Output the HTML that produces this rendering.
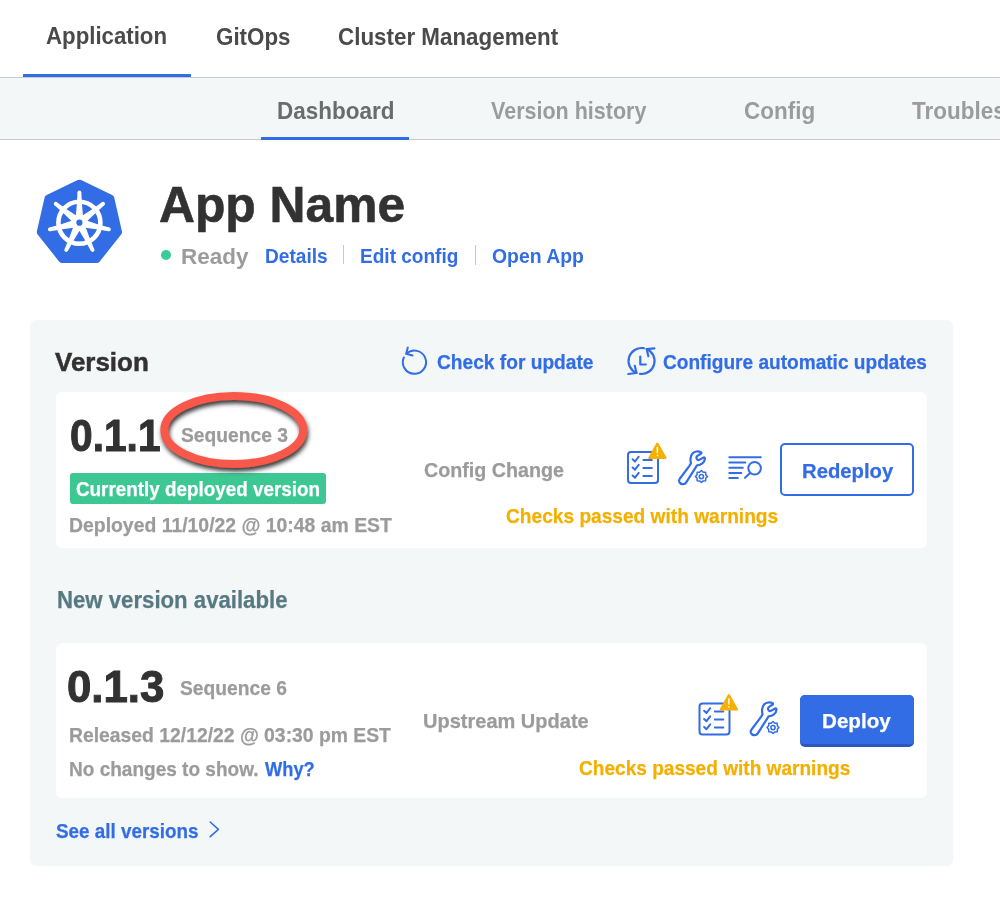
<!DOCTYPE html>
<html>
<head>
<meta charset="utf-8">
<style>
html,body{margin:0;padding:0;background:#fff;width:1000px;height:898px;overflow:hidden;position:relative;}
body{font-family:"Liberation Sans",sans-serif;font-weight:700;}
.t{position:absolute;white-space:nowrap;transform-origin:0 0;}
.abs{position:absolute;}
svg{position:absolute;left:0;top:0;overflow:visible;}
</style>
</head>
<body>
<!-- top nav -->
<div class="abs" style="left:0;top:77px;width:1000px;height:1px;background:#c6cacc;"></div>
<div class="abs" style="left:23px;top:74px;width:168px;height:3px;background:#326de6;"></div>
<!-- sub nav -->
<div class="abs" style="left:0;top:78px;width:1000px;height:61px;background:#f4f7f8;"></div>
<div class="abs" style="left:0;top:139px;width:1000px;height:1px;background:#c6cacc;"></div>
<div class="abs" style="left:261px;top:137px;width:148px;height:3px;background:#326de6;"></div>

<!-- app header dividers / dot -->
<div class="abs" style="left:161px;top:250px;width:10px;height:10px;border-radius:50%;background:#38cc97;"></div>
<div class="abs" style="left:343px;top:245px;width:1px;height:19px;background:#c8c8c8;"></div>
<div class="abs" style="left:475px;top:244.5px;width:1px;height:20px;background:#c8c8c8;"></div>

<!-- version outer card -->
<div class="abs" style="left:30px;top:320px;width:923px;height:546px;border-radius:6px;background:#f4f7f8;"></div>
<!-- inner cards -->
<div class="abs" style="left:56px;top:392px;width:871px;height:156px;border-radius:6px;background:#fff;"></div>
<div class="abs" style="left:56px;top:643px;width:871px;height:155px;border-radius:6px;background:#fff;"></div>
<!-- badge -->
<div class="abs" style="left:70px;top:473.2px;width:256px;height:30.4px;border-radius:3px;background:#3cc793;"></div>
<!-- redeploy button -->
<div class="abs" style="left:780px;top:443px;width:130px;height:49px;border:2px solid #326de6;border-radius:5px;box-sizing:content-box;"></div>
<!-- deploy button -->
<div class="abs" style="left:800px;top:695px;width:114px;height:52px;border-radius:5px;background:#2a58be;"></div>
<div class="abs" style="left:800px;top:695px;width:114px;height:49px;border-radius:5px 5px 4px 4px;background:#326de6;"></div>

<svg width="1000" height="898" viewBox="0 0 1000 898">
  <defs>
    <filter id="sh" x="-20%" y="-30%" width="140%" height="160%">
      <feDropShadow dx="1.2" dy="3.5" stdDeviation="2" flood-color="#3a3a3a" flood-opacity="1"/>
    </filter>
    <g id="chk" fill="none" stroke="#326de6" stroke-width="2" stroke-linecap="round" stroke-linejoin="round">
      <rect x="628" y="452" width="30" height="31" rx="3"/>
      <polyline points="632.6,459.3 635,461.5 638.7,456.7"/>
      <polyline points="632.6,467.5 635,469.7 638.7,464.9"/>
      <polyline points="632.6,475.5 635,477.7 638.7,472.9"/>
      <line x1="643.4" y1="460" x2="651.8" y2="460"/>
      <line x1="643.4" y1="468" x2="651.8" y2="468"/>
      <line x1="643.4" y1="476" x2="651.8" y2="476"/>
      <polygon points="657.4,443.6 649.3,458 665.5,458" fill="#f5b000" stroke="#f5b000" stroke-width="2.2"/>
      <line x1="657.4" y1="447.6" x2="657.4" y2="452.6" stroke="#fff" stroke-width="1.5"/>
      <circle cx="657.4" cy="455.4" r="0.8" fill="#fff" stroke="none"/>
    </g>
    <g id="wr" fill="none" stroke="#326de6" stroke-linecap="round" stroke-linejoin="round">
      <path stroke-width="2.2" d="M19.6 20.6 L21.0 18.2 C20.0 15.5 20.3 11.0 22.5 8.5 C24.5 6.3 28.5 5.8 31.2 7.4 Q31.8 8.0 30.8 8.8 L27.8 10.6 C25.4 12.0 26.4 15.6 29.2 14.9 L33.6 12.5 Q35.0 12.0 34.9 13.6 C34.6 17.6 31.0 20.2 27.0 20.3 L16.2 37.4 C14.8 39.9 10.6 39.8 9.3 37.0 Q8.7 35.4 9.6 34.0 Z"/>
      <polygon stroke-width="1.5" points="31.40,25.55 33.20,27.21 35.64,27.31 35.74,29.75 37.40,31.55 35.74,33.35 35.64,35.79 33.20,35.89 31.40,37.55 29.60,35.89 27.16,35.79 27.06,33.35 25.40,31.55 27.06,29.75 27.16,27.31 29.60,27.21"/>
      <circle stroke-width="1.5" cx="31.4" cy="31.55" r="2.1"/>
    </g>
  </defs>

  <!-- kubernetes logo -->
  <polygon points="79.40,183.70 110.36,198.61 118.01,232.11 96.58,258.98 62.22,258.98 40.79,232.11 48.44,198.61" fill="#326de6" stroke="#326de6" stroke-width="8" stroke-linejoin="round"/>
  <g fill="#fff">
    <circle cx="79.4" cy="222.7" r="21" fill="none" stroke="#fff" stroke-width="4.6"/>
    <g id="spk">
      <polygon points="83.20,217.70 82.00,204.70 81.30,192.40 77.50,192.40 76.80,204.70 75.60,217.70"/>
      <circle cx="79.4" cy="192.4" r="1.9"/>
    </g>
    <use href="#spk" transform="rotate(51.4286 79.4 222.7)"/>
    <use href="#spk" transform="rotate(102.857 79.4 222.7)"/>
    <use href="#spk" transform="rotate(154.286 79.4 222.7)"/>
    <use href="#spk" transform="rotate(205.714 79.4 222.7)"/>
    <use href="#spk" transform="rotate(257.143 79.4 222.7)"/>
    <use href="#spk" transform="rotate(308.571 79.4 222.7)"/>
    <circle cx="79.4" cy="222.7" r="8.3"/>
    <circle cx="79.4" cy="222.7" r="3.1" fill="#326de6"/>
  </g>

  <!-- check for update icon -->
  <g fill="none" stroke="#326de6" stroke-width="2" stroke-linecap="round" stroke-linejoin="round">
    <path d="M403.85,357.48 A11.6,11.6 0 1 0 406.39,353.86"/>
    <polyline points="407.8,347.5 406.2,353.8 412.5,355.5"/>
  </g>
  <!-- configure automatic updates icon -->
  <g fill="none" stroke="#326de6" stroke-width="2.2" stroke-linecap="round" stroke-linejoin="round">
    <path d="M643.81,348.20 A13,13 0 0 0 636.47,372.97"/>
    <polyline points="634.8,365.8 636.47,372.97 628.3,374.0"/>
    <path d="M639.97,373.90 A13,13 0 0 0 646.63,349.03"/>
    <polyline points="654.4,348.4 646.63,349.03 648.4,356.2"/>
    <polyline points="640.3,356.5 640.3,364.5 645.8,364.5"/>
  </g>

  <!-- card 1 icons -->
  <use href="#chk"/>
  <use href="#wr" transform="translate(670,445)"/>
  <g fill="none" stroke="#326de6" stroke-width="2" stroke-linecap="round">
    <line x1="729.3" y1="457.3" x2="760.8" y2="457.3"/>
    <line x1="729.3" y1="462.5" x2="745.3" y2="462.5"/>
    <line x1="729.3" y1="467.8" x2="742.8" y2="467.8"/>
    <line x1="729.3" y1="473" x2="741.3" y2="473"/>
    <line x1="729.3" y1="478" x2="737.8" y2="478"/>
    <circle cx="754.6" cy="468.3" r="6.3"/>
    <line x1="749.6" y1="473.6" x2="745" y2="477.8"/>
  </g>
  <!-- card 2 icons -->
  <use href="#chk" transform="translate(71.5,251.5)"/>
  <use href="#wr" transform="translate(741.6,696)"/>

  <!-- chevron -->
  <polyline points="210.2,822 218.4,829.3 210.2,836.6" fill="none" stroke="#326de6" stroke-width="1.6" stroke-linecap="round" stroke-linejoin="round"/>
  <!-- red ellipse -->
  <ellipse cx="233.75" cy="429.95" rx="69.45" ry="34.05" fill="none" stroke="#f7584a" stroke-width="8" filter="url(#sh)"/>
</svg>

<div class="t" id="tx0" style="left:46.38px;top:24.75px;font-size:23.20px;line-height:23.20px;color:#4a4a4a;transform:scaleX(0.9587);">Application</div>
<div class="t" id="tx1" style="left:215.69px;top:26.25px;font-size:23.20px;line-height:23.20px;color:#4a4a4a;transform:scaleX(0.9642);">GitOps</div>
<div class="t" id="tx2" style="left:338.18px;top:26.25px;font-size:23.20px;line-height:23.20px;color:#4a4a4a;transform:scaleX(0.9652);">Cluster Management</div>
<div class="t" id="tx3" style="left:277.43px;top:100.24px;font-size:23.20px;line-height:23.20px;color:#6b6b6b;transform:scaleX(0.9696);">Dashboard</div>
<div class="t" id="tx4" style="left:490.83px;top:100.25px;font-size:23.20px;line-height:23.20px;color:#9b9b9b;transform:scaleX(0.9278);">Version history</div>
<div class="t" id="tx5" style="left:744.38px;top:100.25px;font-size:23.20px;line-height:23.20px;color:#9b9b9b;transform:scaleX(0.9691);">Config</div>
<div class="t" id="tx6" style="left:911.98px;top:100.25px;font-size:23.20px;line-height:23.20px;color:#9b9b9b;transform:scaleX(0.9691);">Troubleshoot</div>
<div class="t" id="tx7" style="left:158.95px;top:180.30px;font-size:50.14px;line-height:50.14px;color:#323232;transform:scaleX(0.9931);-webkit-text-stroke:0.6px #323232;">App Name</div>
<div class="t" id="tx8" style="left:181.44px;top:245.64px;font-size:22.00px;line-height:22.00px;color:#9b9b9b;transform:scaleX(1.0212);">Ready</div>
<div class="t" id="tx9" style="left:264.93px;top:245.74px;font-size:20.80px;line-height:20.80px;color:#326de6;transform:scaleX(0.9191);">Details</div>
<div class="t" id="tx10" style="left:360.43px;top:245.74px;font-size:20.80px;line-height:20.80px;color:#326de6;transform:scaleX(0.9157);">Edit config</div>
<div class="t" id="tx11" style="left:491.74px;top:245.73px;font-size:20.80px;line-height:20.80px;color:#326de6;transform:scaleX(0.9327);">Open App</div>
<div class="t" id="tx12" style="left:54.86px;top:349.25px;font-size:26.21px;line-height:26.21px;color:#323232;transform:scaleX(0.9903);-webkit-text-stroke:0.5px #323232;">Version</div>
<div class="t" id="tx13" style="left:437.36px;top:351.94px;font-size:20.80px;line-height:20.80px;color:#326de6;transform:scaleX(0.9211);-webkit-text-stroke:0.25px #326de6;">Check for update</div>
<div class="t" id="tx14" style="left:662.96px;top:351.94px;font-size:20.80px;line-height:20.80px;color:#326de6;transform:scaleX(0.9175);-webkit-text-stroke:0.25px #326de6;">Configure automatic updates</div>
<div class="t" id="tx15" style="left:69.57px;top:413.99px;font-size:44.00px;line-height:44.00px;color:#323232;transform:scaleX(0.9249);-webkit-text-stroke:1px #323232;">0.1.1</div>
<div class="t" id="tx16" style="left:180.51px;top:424.93px;font-size:20.80px;line-height:20.80px;color:#9b9b9b;transform:scaleX(0.9256);-webkit-text-stroke:0.25px #9b9b9b;">Sequence 3</div>
<div class="t" id="tx17" style="left:75.78px;top:479.14px;font-size:20.80px;line-height:20.80px;color:#ffffff;transform:scaleX(0.9062);-webkit-text-stroke:0.25px #ffffff;">Currently deployed version</div>
<div class="t" id="tx18" style="left:69.30px;top:515.33px;font-size:20.80px;line-height:20.80px;color:#9b9b9b;transform:scaleX(0.9325);-webkit-text-stroke:0.25px #9b9b9b;">Deployed 11/10/22 @ 10:48 am EST</div>
<div class="t" id="tx19" style="left:424.03px;top:459.94px;font-size:20.80px;line-height:20.80px;color:#9b9b9b;transform:scaleX(0.9465);-webkit-text-stroke:0.25px #9b9b9b;">Config Change</div>
<div class="t" id="tx20" style="left:506.11px;top:506.34px;font-size:20.80px;line-height:20.80px;color:#f4b000;transform:scaleX(0.9199);-webkit-text-stroke:0.25px #f4b000;">Checks passed with warnings</div>
<div class="t" id="tx21" style="left:802.00px;top:461.44px;font-size:20.80px;line-height:20.80px;color:#326de6;transform:scaleX(0.9746);-webkit-text-stroke:0.25px #326de6;">Redeploy</div>
<div class="t" id="tx22" style="left:56.96px;top:589.24px;font-size:23.21px;line-height:23.21px;color:#577982;transform:scaleX(0.9557);-webkit-text-stroke:0.25px #577982;">New version available</div>
<div class="t" id="tx23" style="left:67.19px;top:665.49px;font-size:44.00px;line-height:44.00px;color:#323232;transform:scaleX(0.9947);-webkit-text-stroke:1px #323232;">0.1.3</div>
<div class="t" id="tx24" style="left:180.11px;top:677.53px;font-size:20.80px;line-height:20.80px;color:#9b9b9b;transform:scaleX(0.9248);-webkit-text-stroke:0.25px #9b9b9b;">Sequence 6</div>
<div class="t" id="tx25" style="left:69.31px;top:725.24px;font-size:20.80px;line-height:20.80px;color:#9b9b9b;transform:scaleX(0.9296);-webkit-text-stroke:0.25px #9b9b9b;">Released 12/12/22 @ 03:30 pm EST</div>
<div class="t" id="tx26" style="left:69.33px;top:759.34px;font-size:20.80px;line-height:20.80px;color:#9b9b9b;transform:scaleX(0.9145);-webkit-text-stroke:0.25px #9b9b9b;">No changes to show.</div>
<div class="t" id="tx27" style="left:264.79px;top:759.34px;font-size:20.80px;line-height:20.80px;color:#326de6;transform:scaleX(0.8784);-webkit-text-stroke:0.25px #326de6;">Why?</div>
<div class="t" id="tx28" style="left:422.55px;top:711.14px;font-size:20.80px;line-height:20.80px;color:#9b9b9b;transform:scaleX(0.9621);-webkit-text-stroke:0.25px #9b9b9b;">Upstream Update</div>
<div class="t" id="tx29" style="left:579.06px;top:757.74px;font-size:20.80px;line-height:20.80px;color:#f4b000;transform:scaleX(0.9170);-webkit-text-stroke:0.25px #f4b000;">Checks passed with warnings</div>
<div class="t" id="tx30" style="left:822.38px;top:710.74px;font-size:20.80px;line-height:20.80px;color:#ffffff;transform:scaleX(0.9910);-webkit-text-stroke:0.25px #ffffff;">Deploy</div>
<div class="t" id="tx31" style="left:55.91px;top:821.44px;font-size:20.80px;line-height:20.80px;color:#326de6;transform:scaleX(0.9063);-webkit-text-stroke:0.25px #326de6;">See all versions</div>
</body>
</html>
